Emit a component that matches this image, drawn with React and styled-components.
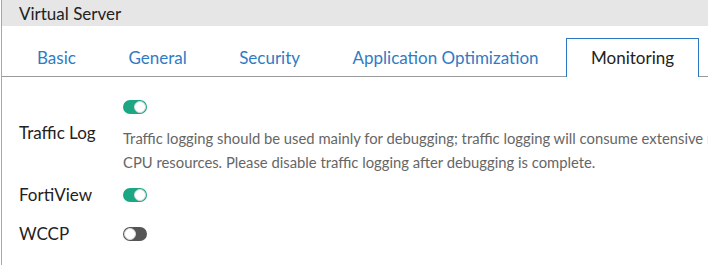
import React from "react";
import styled, { createGlobalStyle } from "styled-components";

const Global = createGlobalStyle`
  html, body { margin: 0; padding: 0; background: #fff; overflow: hidden; }
  body { font-family: Lato, "Open Sans", sans-serif; }
`;

const Panel = styled.div`
  margin-left: 1px;
  border-left: 1px solid #a8a8a8;
  min-height: 265px;
  box-sizing: border-box;
  overflow: hidden;
`;

const Header = styled.div`
  height: 26px;
  background: #e6e6e6;
  display: flex;
  align-items: center;
  padding-left: 17px;
  font-size: 17px;
  color: #222;
`;

const TabBar = styled.div`
  height: 51px;
  display: flex;
  align-items: flex-end;
  gap: 2.5px;
  padding-left: 10px;
  border-bottom: 1px solid #9a9a9a;
  box-sizing: border-box;
  white-space: nowrap;
`;

const Tab = styled.div`
  flex: none;
  height: ${(p) => (p.$active ? 39 : 38)}px;
  box-sizing: border-box;
  padding: 0 24px ${(p) => (p.$active ? 1 : 0)}px;
  display: flex;
  align-items: center;
  font-size: 17px;
  color: ${(p) => (p.$active ? "#222" : "#2f7bc4")};
  border: 1px solid ${(p) => (p.$active ? "#2b78c2" : "transparent")};
  border-bottom: none;
  background: ${(p) => (p.$active ? "#fff" : "transparent")};
  margin-bottom: ${(p) => (p.$active ? -1 : 0)}px;
`;

const Content = styled.div`
  padding: 22px 0 0 17px;
  display: flex;
  flex-direction: column;
`;

const Row = styled.div`
  display: flex;
  align-items: center;
  min-height: ${(p) => p.$h || 39}px;
`;

const Label = styled.div`
  width: 104px;
  flex: none;
  font-size: 17px;
  color: #222;
  padding-bottom: ${(p) => p.$pb || 0}px;
`;

const Control = styled.div`
  display: flex;
  flex-direction: column;
  align-items: flex-start;
`;

const Description = styled.div`
  margin-top: 12px;
  font-size: 14.8px;
  line-height: 24px;
  color: #666;
  white-space: nowrap;
`;

const Track = styled.div`
  position: relative;
  width: 24px;
  height: 14px;
  border-radius: 7px;
  background: ${(p) => (p.$on ? "#1ba784" : "#555")};
  flex: none;
`;

const Knob = styled.div`
  position: absolute;
  top: 1px;
  left: ${(p) => (p.$on ? "11px" : "1px")};
  width: 12px;
  height: 12px;
  border-radius: 50%;
  background: #fff;
  box-sizing: border-box;
  border: 1px solid #d8d8d8;
`;

const Toggle = ({ on }) => (
  <Track $on={on}>
    <Knob $on={on} />
  </Track>
);

const tabs = ["Basic", "General", "Security", "Application Optimization", "Monitoring"];

export default function App() {
  return (
    <>
      <Global />
      <Panel>
        <Header>Virtual Server</Header>
        <TabBar>
          {tabs.map((t) => (
            <Tab key={t} $active={t === "Monitoring"}>
              {t}
            </Tab>
          ))}
        </TabBar>
        <Content>
          <Row $h={76}>
            <Label $pb={10}>Traffic Log</Label>
            <Control>
              <Toggle on />
              <Description>
                Traffic logging should be used mainly for debugging; traffic logging will consume extensive memory and
                <br />
                CPU resources. Please disable traffic logging after debugging is complete.
              </Description>
            </Control>
          </Row>
          <Row>
            <Label>FortiView</Label>
            <Control>
              <Toggle on />
            </Control>
          </Row>
          <Row>
            <Label>WCCP</Label>
            <Control>
              <Toggle />
            </Control>
          </Row>
        </Content>
      </Panel>
    </>
  );
}
